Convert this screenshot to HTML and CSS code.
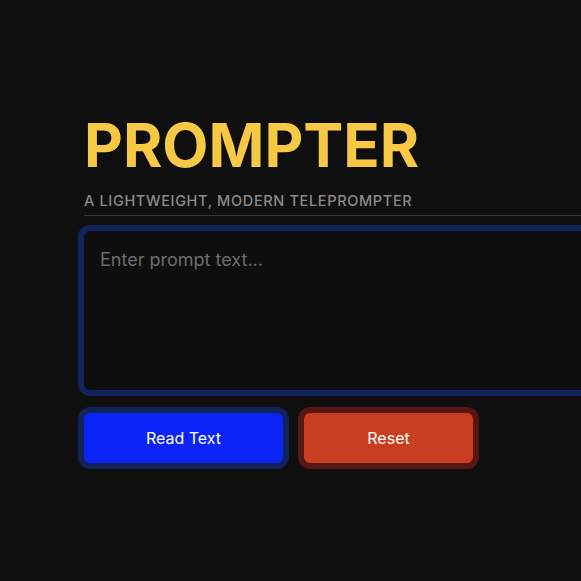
FILE: index.html
```html
<!DOCTYPE html>
<html lang="en">
<head>
<meta charset="utf-8">
<title>Prompter</title>
<link rel="stylesheet" href="styles.css">
</head>
<body>
<main class="app">
  <header class="header">
    <h1 class="title">PROMPTER</h1>
    <p class="subtitle">A lightweight, modern teleprompter</p>
  </header>
  <textarea class="prompt-input" placeholder="Enter prompt text..."></textarea>
  <div class="actions">
    <button class="btn btn-read">Read Text</button>
    <button class="btn btn-reset">Reset</button>
  </div>
</main>
</body>
</html>
```

FILE: styles.css
```css
html, body {
  margin: 0;
  padding: 0;
  overflow: hidden;
  background: #0f0f0f;
}

body {
  font-family: Inter, "Noto Sans", sans-serif;
  width: 581px;
  height: 581px;
}

.app {
  box-sizing: border-box;
  width: 581px;
  height: 581px;
  padding: 115px 0 0 84px;
  overflow: hidden;
}

.header {
  width: 540px;
  border-bottom: 1px solid #353535;
  padding-bottom: 7px;
}

.title {
  margin: 0;
  font-size: 60px;
  line-height: 60px;
  font-weight: 700;
  color: #f7c843;
}

.subtitle {
  margin: 19px 0 0;
  font-size: 14.5px;
  line-height: 14px;
  font-weight: 500;
  color: #8a8a8a;
  text-transform: uppercase;
  letter-spacing: 0.65px;
}

.prompt-input {
  display: block;
  box-sizing: border-box;
  margin-top: 15px;
  width: 540px;
  height: 159px;
  padding: 18px 16px;
  border: none;
  border-radius: 6px;
  background: #0e0e0e;
  box-shadow: 0 0 0 6px #13235e;
  color: #ddd;
  font-family: Inter, "Noto Sans", sans-serif;
  font-size: 18px;
  resize: none;
  outline: none;
}

.prompt-input::placeholder {
  color: #6c6c6c;
}

.actions {
  display: flex;
  gap: 21px;
  margin-top: 23px;
}

.btn {
  height: 50px;
  padding: 0;
  border: none;
  border-radius: 6px;
  color: #fff;
  font-family: Inter, "Noto Sans", sans-serif;
  font-size: 16px;
  font-weight: 400;
}

.btn-read {
  width: 199px;
  background: #0a24f6;
  box-shadow: 0 0 0 6px #12225b;
}

.btn-reset {
  width: 169px;
  background: #c93e21;
  box-shadow: 0 0 0 6px #561711;
}
```
